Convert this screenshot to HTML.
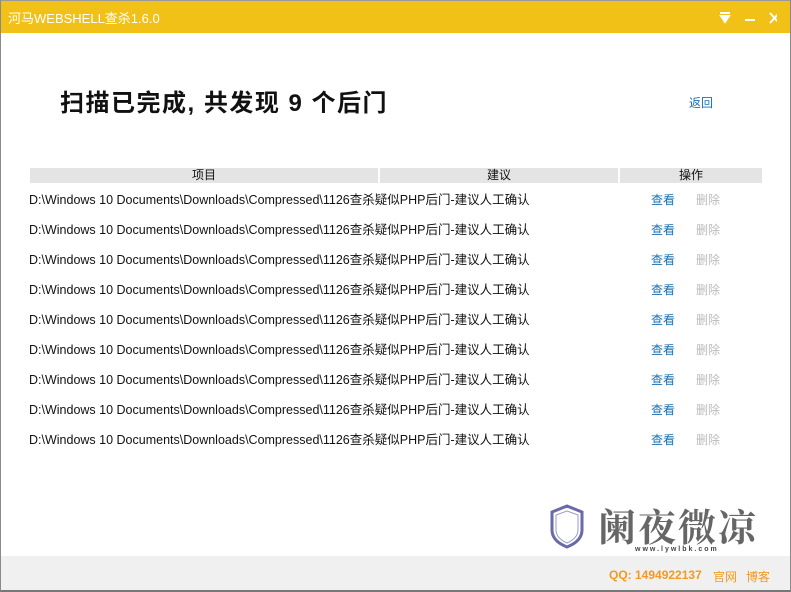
<!DOCTYPE html>
<html><head><meta charset="utf-8"><style>
*{margin:0;padding:0;box-sizing:border-box}
body{width:791px;height:592px;overflow:hidden;background:#fff;font-family:"Liberation Sans","Noto Sans CJK SC",sans-serif;position:relative}
.frame{position:absolute;left:0;top:0;width:791px;height:592px;border-left:1px solid #8a8a8a;border-right:1px solid #8a8a8a;border-bottom:2px solid #777;pointer-events:none;z-index:5}
.title{position:absolute;left:0;top:0;width:791px;height:33px;background:#f2c118;border-top:1px solid #999}
.title span{position:absolute;left:8px;top:7px;color:#fff;font-size:13px}
.h1{position:absolute;left:60px;top:83px;font-size:24px;letter-spacing:1.5px;font-weight:bold;color:#111}
.back{position:absolute;left:689px;top:94px;font-size:12px;color:#1a6fb0}
.hd{position:absolute;top:168px;height:15px;background:#e4e4e4;font-size:12px;line-height:15px;text-align:center;color:#111}
.row{position:absolute;left:29px;font-size:12.5px;color:#111;white-space:nowrap}
.v{position:absolute;left:651px;font-size:12px;color:#1a6fb0}
.d{position:absolute;left:696px;font-size:12px;color:#bbb}
.foot{position:absolute;left:0;top:556px;width:791px;height:34px;background:#f0f0f0}
.foot span{position:absolute;top:12px;font-size:12px;color:#f39a1e}
</style></head><body>
<div class="frame"></div>
<div class="title"><span>河马WEBSHELL查杀1.6.0</span>
<svg style="position:absolute;left:717px;top:10px" width="60" height="14"><path d="M3 2h10M4 5h8l-4 6z" stroke="#fff" stroke-width="2" fill="#fff"/><path d="M28 9h10" stroke="#fff" stroke-width="2"/><path d="M53 2l9 10M62 2l-9 10" stroke="#fff" stroke-width="2"/></svg></div>
<div class="h1">扫描已完成, 共发现 9 个后门</div>
<div class="back">返回</div>
<div class="hd" style="left:30px;width:348px">项目</div>
<div class="hd" style="left:380px;width:238px">建议</div>
<div class="hd" style="left:620px;width:142px">操作</div>
<div class="row" style="top:189px">D:\Windows 10 Documents\Downloads\Compressed\1126查杀疑似PHP后门-建议人工确认</div><div class="v" style="top:191px">查看</div><div class="d" style="top:191px">删除</div>
<div class="row" style="top:219px">D:\Windows 10 Documents\Downloads\Compressed\1126查杀疑似PHP后门-建议人工确认</div><div class="v" style="top:221px">查看</div><div class="d" style="top:221px">删除</div>
<div class="row" style="top:249px">D:\Windows 10 Documents\Downloads\Compressed\1126查杀疑似PHP后门-建议人工确认</div><div class="v" style="top:251px">查看</div><div class="d" style="top:251px">删除</div>
<div class="row" style="top:279px">D:\Windows 10 Documents\Downloads\Compressed\1126查杀疑似PHP后门-建议人工确认</div><div class="v" style="top:281px">查看</div><div class="d" style="top:281px">删除</div>
<div class="row" style="top:309px">D:\Windows 10 Documents\Downloads\Compressed\1126查杀疑似PHP后门-建议人工确认</div><div class="v" style="top:311px">查看</div><div class="d" style="top:311px">删除</div>
<div class="row" style="top:339px">D:\Windows 10 Documents\Downloads\Compressed\1126查杀疑似PHP后门-建议人工确认</div><div class="v" style="top:341px">查看</div><div class="d" style="top:341px">删除</div>
<div class="row" style="top:369px">D:\Windows 10 Documents\Downloads\Compressed\1126查杀疑似PHP后门-建议人工确认</div><div class="v" style="top:371px">查看</div><div class="d" style="top:371px">删除</div>
<div class="row" style="top:399px">D:\Windows 10 Documents\Downloads\Compressed\1126查杀疑似PHP后门-建议人工确认</div><div class="v" style="top:401px">查看</div><div class="d" style="top:401px">删除</div>
<div class="row" style="top:429px">D:\Windows 10 Documents\Downloads\Compressed\1126查杀疑似PHP后门-建议人工确认</div><div class="v" style="top:431px">查看</div><div class="d" style="top:431px">删除</div>
<svg style="position:absolute;left:549px;top:503px" width="36" height="46"><path d="M18 3L33 9V27Q33 38 18 44Q3 38 3 27V9Z" fill="none" stroke="#6a6aa8" stroke-width="3"/><path d="M18 8L29 12V27Q29 35 18 40Q7 35 7 27V12Z" fill="none" stroke="#9a9ad0" stroke-width="1"/></svg>
<div style="position:absolute;left:598px;top:504px;font-size:38px;font-weight:bold;color:#666;font-family:'Noto Serif CJK SC',serif;letter-spacing:2px;line-height:42px">阑夜微凉</div>
<div style="position:absolute;left:635px;top:546px;font-size:7px;color:#444;font-weight:bold;letter-spacing:2px">www.lywlbk.com</div>
<div class="foot"><span style="left:609px;font-weight:bold">QQ: 1494922137</span><span style="left:713px">官网</span><span style="left:746px">博客</span></div>
</body></html>
